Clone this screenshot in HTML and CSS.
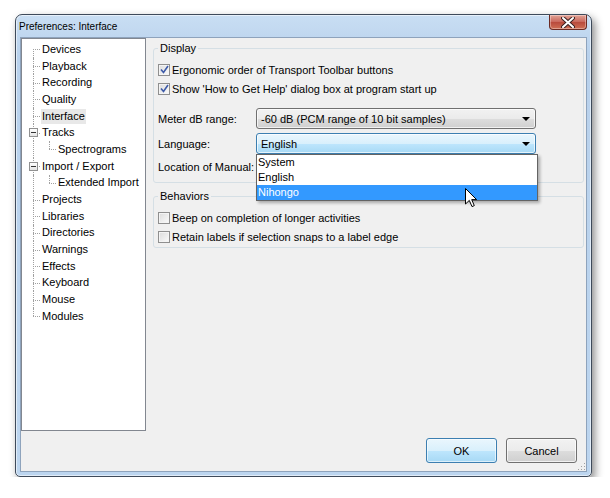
FILE: index.html
```html
<!DOCTYPE html>
<html>
<head>
<meta charset="utf-8">
<link rel="stylesheet" href="styles.css">
</head>
<body>
<div class="window">
  <div class="titlebar">
    <span class="title">Preferences: Interface</span>
    <div class="close">
      <svg width="14" height="11" viewBox="0 0 14 11"><path d="M2 1 L12 10 M12 1 L2 10" stroke="#3a2020" stroke-width="4" stroke-linecap="round"/><path d="M2 1 L12 10 M12 1 L2 10" stroke="#fff" stroke-width="2" stroke-linecap="round"/></svg>
    </div>
  </div>
  <div class="client">
    <div class="main">
      <div class="tree">
        <div class="row"><span class="g v first stub"></span><span class="lbl">Devices</span></div>
        <div class="row"><span class="g v stub"></span><span class="lbl">Playback</span></div>
        <div class="row"><span class="g v stub"></span><span class="lbl">Recording</span></div>
        <div class="row"><span class="g v stub"></span><span class="lbl">Quality</span></div>
        <div class="row"><span class="g v stub"></span><span class="lbl sel">Interface</span></div>
        <div class="row"><span class="g v stub"><span class="box"></span></span><span class="lbl">Tracks</span></div>
        <div class="row"><span class="g v"></span><span class="g2"></span><span class="lbl">Spectrograms</span></div>
        <div class="row"><span class="g v stub"><span class="box"></span></span><span class="lbl">Import / Export</span></div>
        <div class="row"><span class="g v"></span><span class="g2"></span><span class="lbl">Extended Import</span></div>
        <div class="row"><span class="g v stub"></span><span class="lbl">Projects</span></div>
        <div class="row"><span class="g v stub"></span><span class="lbl">Libraries</span></div>
        <div class="row"><span class="g v stub"></span><span class="lbl">Directories</span></div>
        <div class="row"><span class="g v stub"></span><span class="lbl">Warnings</span></div>
        <div class="row"><span class="g v stub"></span><span class="lbl">Effects</span></div>
        <div class="row"><span class="g v stub"></span><span class="lbl">Keyboard</span></div>
        <div class="row"><span class="g v stub"></span><span class="lbl">Mouse</span></div>
        <div class="row"><span class="g v last stub"></span><span class="lbl">Modules</span></div>
      </div>
      <div class="panel">
        <fieldset class="group display">
          <legend>Display</legend>
          <div class="check"><span class="cb on"><svg width="9" height="9" viewBox="0 0 9 9"><path d="M1 4.5 L3.5 7.5 L8 1" fill="none" stroke="#3d5aa8" stroke-width="1.6"/></svg></span>Ergonomic order of Transport Toolbar buttons</div>
          <div class="check"><span class="cb on"><svg width="9" height="9" viewBox="0 0 9 9"><path d="M1 4.5 L3.5 7.5 L8 1" fill="none" stroke="#3d5aa8" stroke-width="1.6"/></svg></span>Show 'How to Get Help' dialog box at program start up</div>
          <div class="field meter">
            <span class="flabel">Meter dB range:</span>
            <div class="combo"><span class="ctext">-60 dB (PCM range of 10 bit samples)</span><span class="arrow"></span></div>
          </div>
          <div class="field lang">
            <span class="flabel">Language:</span>
            <div class="combo focus"><span class="ctext">English</span><span class="arrow"></span>
              <div class="list">
                <div class="item">System</div>
                <div class="item">English</div>
                <div class="item hi">Nihongo</div>
                <svg class="cursor" width="13" height="20" viewBox="0 0 13 20"><path d="M0.5 0.5 L0.5 16 L4.3 12.4 L7 18.6 L9.3 17.6 L6.7 11.6 L11.6 11.6 Z" fill="#fff" stroke="#000" stroke-width="1" stroke-linejoin="round"/></svg>
              </div>
            </div>
          </div>
          <div class="field loc">
            <span class="flabel">Location of Manual:</span>
          </div>
        </fieldset>
        <fieldset class="group behaviors">
          <legend>Behaviors</legend>
          <div class="check"><span class="cb"></span>Beep on completion of longer activities</div>
          <div class="check"><span class="cb"></span>Retain labels if selection snaps to a label edge</div>
        </fieldset>
      </div>
    </div>
    <div class="footer">
      <button class="btn default">OK</button>
      <button class="btn">Cancel</button>
    </div>
    <svg class="grip" width="10" height="10" viewBox="0 0 10 10">
      <rect x="8" y="2" width="1" height="1" fill="#a0a0a0"/>
      <rect x="5" y="5" width="1" height="1" fill="#a0a0a0"/>
      <rect x="8" y="5" width="1" height="1" fill="#a0a0a0"/>
      <rect x="2" y="8" width="1" height="1" fill="#a0a0a0"/>
      <rect x="5" y="8" width="1" height="1" fill="#a0a0a0"/>
      <rect x="8" y="8" width="1" height="1" fill="#a0a0a0"/>
    </svg>
  </div>
</div>
</body>
</html>
```

FILE: styles.css
```css
* { box-sizing: border-box; }
html, body { margin: 0; padding: 0; background: #fff; }
body {
  font-family: "Liberation Sans", Arial, sans-serif;
  font-size: 11px;
  color: #000;
  padding: 14px 0 0 15px;
}
.window {
  width: 577px;
  height: 463px;
  border: 1px solid #3e4a5a;
  border-radius: 7px 7px 5px 5px;
  background: linear-gradient(#c9def3, #b8d1ec 40px, #bcd5ef);
  box-shadow: inset 0 0 0 1px rgba(255,255,255,0.55), 3px 4px 9px rgba(0,0,0,0.45);
  display: flex;
  flex-direction: column;
}
.titlebar {
  height: 22px;
  flex: none;
  display: flex;
  align-items: flex-start;
  justify-content: space-between;
  padding-left: 3px;
}
.title {
  font-size: 10px;
  line-height: 22px;
  padding-top: 1px;
}
.close {
  width: 38px;
  height: 15px;
  margin-right: 4px;
  border: 1px solid #6b2a22;
  border-top: none;
  border-radius: 0 0 4px 4px;
  background: linear-gradient(#e3a497, #c8665a 50%, #b84a3c 51%, #cf6f55);
  box-shadow: inset 0 0 0 1px rgba(255,255,255,0.35);
  display: flex;
  align-items: center;
  justify-content: center;
}
.close svg { display: block; }
.client {
  flex: 1;
  margin: 0 4px 4px 4px;
  border: 1px solid #8ea3bc;
  background: #f0f0f0;
  display: flex;
  flex-direction: column;
  position: relative;
}
.main {
  display: flex;
  height: 393px;
  flex: none;
}
.tree {
  width: 125px;
  height: 393px;
  background: #fff;
  border: 1px solid #828790;
  padding-top: 2px;
}
.row {
  height: 16.7px;
  display: flex;
  align-items: center;
}
.g {
  width: 19px;
  align-self: stretch;
  flex: none;
  position: relative;
}
.g.v::before {
  content: "";
  position: absolute;
  left: 11px;
  top: 0;
  bottom: 0;
  border-left: 1px dotted #a0a0a0;
}
.g.v.first::before { top: 50%; }
.g.v.last::before { bottom: 50%; }
.g.stub::after {
  content: "";
  position: absolute;
  left: 11px;
  top: 50%;
  width: 7px;
  border-top: 1px dotted #a0a0a0;
}
.box {
  position: absolute;
  left: 7px;
  top: 4px;
  width: 9px;
  height: 9px;
  border: 1px solid #919191;
  background: linear-gradient(#fff, #e4e4e4);
  z-index: 1;
}
.box::after {
  content: "";
  position: absolute;
  left: 1px;
  top: 3px;
  width: 5px;
  height: 1px;
  background: #333;
}
.g2 {
  width: 16px;
  align-self: stretch;
  flex: none;
  position: relative;
}
.g2::before {
  content: "";
  position: absolute;
  left: 8px;
  top: 0;
  height: 50%;
  border-left: 1px dotted #a0a0a0;
}
.g2::after {
  content: "";
  position: absolute;
  left: 8px;
  top: 50%;
  width: 7px;
  border-top: 1px dotted #a0a0a0;
}
.lbl {
  padding: 0 1px;
  line-height: 15px;
  white-space: nowrap;
}
.lbl.sel { background: #e8e8e8; }
.panel {
  flex: 1;
  display: flex;
  flex-direction: column;
  padding: 3px 2px 0 7px;
}
.group {
  margin: 0;
  border: 1px solid #d5dfe5;
  border-radius: 3px;
  padding: 0 4px;
  min-width: 0;
}
.group legend {
  padding: 0 2px;
  line-height: 14px;
}
.display { padding-bottom: 6px; }
.behaviors { margin-top: 6px; padding-bottom: 1px; }
.check {
  height: 19px;
  display: flex;
  align-items: center;
  white-space: nowrap;
}
.display .check:first-of-type, .behaviors .check:first-of-type { margin-top: 5px; }
.cb {
  width: 12px;
  height: 12px;
  border: 1px solid #8f8f8f;
  background: linear-gradient(135deg, #dcdcdc, #fbfbfb);
  box-shadow: inset 0 0 0 1px #f4f4f4;
  margin-right: 2px;
  display: flex;
  align-items: center;
  justify-content: center;
  flex: none;
}
.cb svg { display: block; }
.field {
  display: flex;
  align-items: center;
}
.flabel {
  width: 98px;
  flex: none;
  white-space: nowrap;
}
.meter { margin-top: 10px; }
.lang { margin-top: 4px; }
.loc { height: 18px; margin-top: 4px; }
.combo {
  width: 280px;
  height: 21px;
  border: 1px solid #707070;
  border-radius: 3px;
  background: linear-gradient(#f2f2f2, #ebebeb 50%, #dddddd 51%, #cfcfcf);
  box-shadow: inset 0 0 0 1px rgba(255,255,255,0.7);
  display: flex;
  align-items: center;
  justify-content: space-between;
  padding: 0 5px 0 4px;
  position: relative;
}
.combo.focus {
  border-color: #3c7fb1;
  background: linear-gradient(#eaf6fd, #d9f0fc 50%, #bee6fd 51%, #a7d9f5);
}
.arrow {
  width: 0;
  height: 0;
  border-left: 4px solid transparent;
  border-right: 4px solid transparent;
  border-top: 4px solid #000;
  margin-top: 1px;
}
.list {
  position: absolute;
  left: -1px;
  top: 20px;
  width: 282px;
  background: #fff;
  border: 1px solid #646464;
  box-shadow: 2px 2px 3px rgba(0,0,0,0.3);
  padding: 0;
  z-index: 5;
}
.item {
  height: 15px;
  line-height: 15px;
  padding-left: 1px;
}
.item.hi { background: #3399ff; color: #fff; }
.cursor {
  position: absolute;
  left: 208px;
  top: 33px;
}
.footer {
  display: flex;
  justify-content: flex-end;
  gap: 9px;
  padding: 7px 9px 0 0;
}
.btn {
  width: 71px;
  height: 25px;
  font: inherit;
  color: #000;
  border: 1px solid #707070;
  border-radius: 3px;
  background: linear-gradient(#f2f2f2, #ebebeb 50%, #dddddd 51%, #cfcfcf);
  box-shadow: inset 0 0 0 1px rgba(255,255,255,0.7);
  padding: 0;
}
.btn.default {
  border-color: #3c7fb1;
  background: linear-gradient(#eaf6fd, #d9f0fc 50%, #bee6fd 51%, #a7d9f5);
  box-shadow: inset 0 0 0 1px rgba(255,255,255,0.6);
}
.grip {
  position: absolute;
  right: 0;
  bottom: 0;
}
```
